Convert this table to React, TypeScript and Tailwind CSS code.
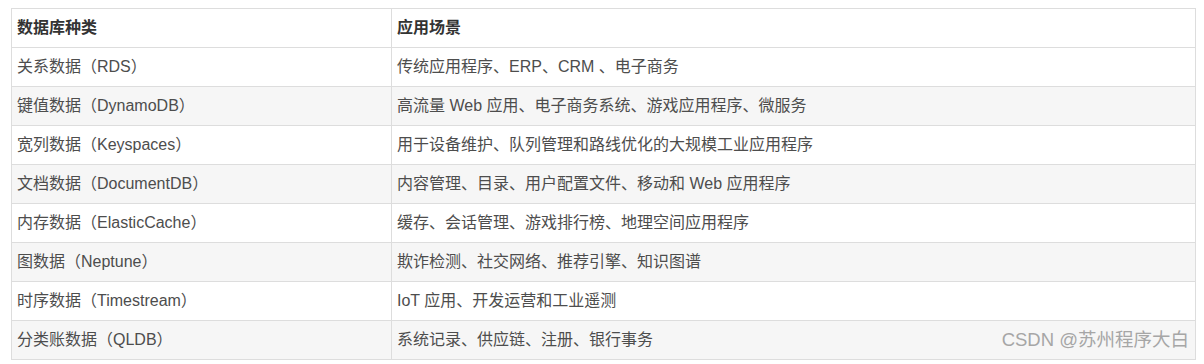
import React from 'react'

const rows: [string, string][] = [
  ['关系数据（RDS）', '传统应用程序、ERP、CRM 、电子商务'],
  ['键值数据（DynamoDB）', '高流量 Web 应用、电子商务系统、游戏应用程序、微服务'],
  ['宽列数据（Keyspaces）', '用于设备维护、队列管理和路线优化的大规模工业应用程序'],
  ['文档数据（DocumentDB）', '内容管理、目录、用户配置文件、移动和 Web 应用程序'],
  ['内存数据（ElasticCache）', '缓存、会话管理、游戏排行榜、地理空间应用程序'],
  ['图数据（Neptune）', '欺诈检测、社交网络、推荐引擎、知识图谱'],
  ['时序数据（Timestream）', 'IoT 应用、开发运营和工业遥测'],
  ['分类账数据（QLDB）', '系统记录、供应链、注册、银行事务'],
]

export default function App() {
  return (
    <div className="relative w-[1204px] h-[364px] bg-white pl-[11px] pt-[8px] font-['Liberation_Sans','Noto_Sans_CJK_SC',sans-serif] text-[16px] text-[#4d4d4d]">
      <table className="w-[1184px] border-collapse table-fixed">
        <colgroup>
          <col className="w-[380px]" />
          <col className="w-[804px]" />
        </colgroup>
        <thead>
          {/* header row */}
          <tr className="bg-white">
            <th className="h-[39px] border border-[#dddddd] px-[5px] py-0 text-left font-bold text-[#333333]">数据库种类</th>
            <th className="h-[39px] border border-[#dddddd] px-[5px] py-0 text-left font-bold text-[#333333]">应用场景</th>
          </tr>
        </thead>
        <tbody>
          {rows.map(([kind, scene], i) => (
            <tr key={kind} className={i % 2 === 1 ? 'bg-[#f6f6f6]' : 'bg-white'}>
              <td className="h-[39px] border border-[#dddddd] px-[5px] py-0">{kind}</td>
              <td className="h-[39px] border border-[#dddddd] px-[5px] py-0">{scene}</td>
            </tr>
          ))}
        </tbody>
      </table>

      {/* watermark */}
      <div className="absolute right-[15px] top-[328px] text-[18.5px] leading-[24px] text-[#a6a6a6] whitespace-nowrap">
        CSDN @苏州程序大白
      </div>
    </div>
  )
}
